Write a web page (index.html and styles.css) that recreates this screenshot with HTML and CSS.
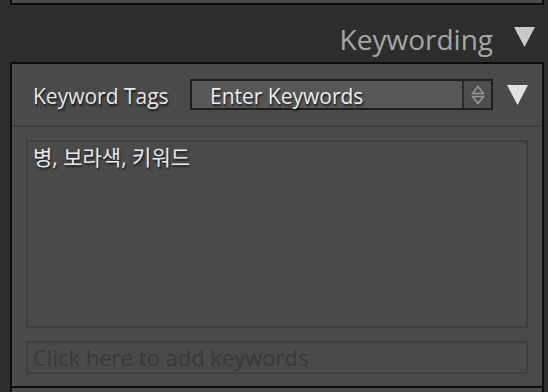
FILE: index.html
```html
<!DOCTYPE html>
<html lang="ko">
<head>
    <meta charset="UTF-8">
    <title>Keywording</title>
    <link rel="stylesheet" href="styles.css">
</head>
<body>
    <div class="prev-panel"></div>

    <div class="section-header">
        <span class="section-title">Keywording</span>
        <svg class="disclosure" width="21" height="20" viewBox="0 0 21 20"><polygon points="0,0 21,0 10.5,20" fill="#c9c9c9"/></svg>
    </div>

    <div class="panel">
        <div class="tags-row">
            <span class="tags-label">Keyword Tags</span>
            <div class="select">
                <span class="select-text">Enter Keywords</span>
                <div class="stepper">
                    <svg width="14" height="20" viewBox="0 0 14 20">
                        <polygon points="7,1.5 12.5,8.5 1.5,8.5" fill="none" stroke="#9a9a9a" stroke-width="1.4"/>
                        <polygon points="1.5,11.5 12.5,11.5 7,18.5" fill="none" stroke="#9a9a9a" stroke-width="1.4"/>
                    </svg>
                </div>
            </div>
            <svg class="disclosure small" width="21" height="20" viewBox="0 0 21 20"><polygon points="0,0 21,0 10.5,20" fill="#e2e2e2"/></svg>
        </div>

        <div class="panel-body">
            <div class="keyword-box">병, 보라색, 키워드</div>
            <div class="add-box">Click here to add keywords</div>
        </div>
    </div>

    <div class="next-panel"></div>
</body>
</html>
```

FILE: styles.css
```css
html, body {
    margin: 0;
    padding: 0;
}
body {
    width: 548px;
    height: 392px;
    overflow: hidden;
    background: #2d2d2d;
    font-family: "Open Sans", "Noto Sans CJK KR", sans-serif;
}
.prev-panel {
    margin: 0 4px 0 10px;
    height: 3px;
    background: #4a4a4a;
    border: 2px solid #0d0d0d;
    border-top: none;
}
.section-header {
    height: 57px;
    display: flex;
    align-items: flex-start;
    justify-content: flex-end;
    padding-right: 13px;
}
.section-title {
    font-size: 28px;
    line-height: 38px;
    color: #a6a6a6;
    margin: 15px 21px 0 0;
}
.disclosure {
    display: block;
    margin-top: 22px;
}
.panel {
    margin: 0 4px 0 10px;
    background: #4a4a4a;
    border: 2px solid #0d0d0d;
    border-bottom: none;
}
.tags-row {
    height: 61px;
    display: flex;
    align-items: center;
    padding-left: 21px;
    border-bottom: 2px solid #3d3d3d;
}
.tags-label {
    font-size: 21px;
    color: #e6e6e6;
    text-shadow: 1px 2px 2px rgba(0, 0, 0, 0.7);
    width: 157px;
    margin-top: 3px;
}
.select {
    width: 299px;
    height: 27px;
    border: 2px solid #1e1e1e;
    background: #575757;
    display: flex;
    align-items: center;
}
.select-text {
    flex: 1;
    padding-left: 18px;
    font-size: 21px;
    color: #ececec;
    text-shadow: 1px 2px 2px rgba(0, 0, 0, 0.7);
    margin-top: 3px;
}
.stepper {
    width: 27px;
    height: 27px;
    border-left: 2px solid #2b2b2b;
    background: #4d4d4d;
    display: flex;
    align-items: center;
    justify-content: center;
}
.stepper svg {
    display: block;
}
.disclosure.small {
    margin: 0 0 0 14px;
}
.panel-body {
    padding: 13px 14px 12px;
    display: flex;
    flex-direction: column;
    gap: 13px;
}
.keyword-box {
    height: 184px;
    border: 2px solid #3e3e3e;
    background: #4a4a4a;
    padding: 0 5px;
    font-size: 21px;
    line-height: 30px;
    color: #e8e8e8;
    text-shadow: 1px 2px 2px rgba(0, 0, 0, 0.6);
}
.add-box {
    height: 29px;
    border: 2px solid #3e3e3e;
    padding: 0 5px;
    font-size: 22px;
    line-height: 29px;
    color: #393939;
}
.next-panel {
    margin: 0 4px 0 10px;
    height: 10px;
    border: 2px solid #0d0d0d;
    border-bottom: none;
    background: #4a4a4a;
}
```
